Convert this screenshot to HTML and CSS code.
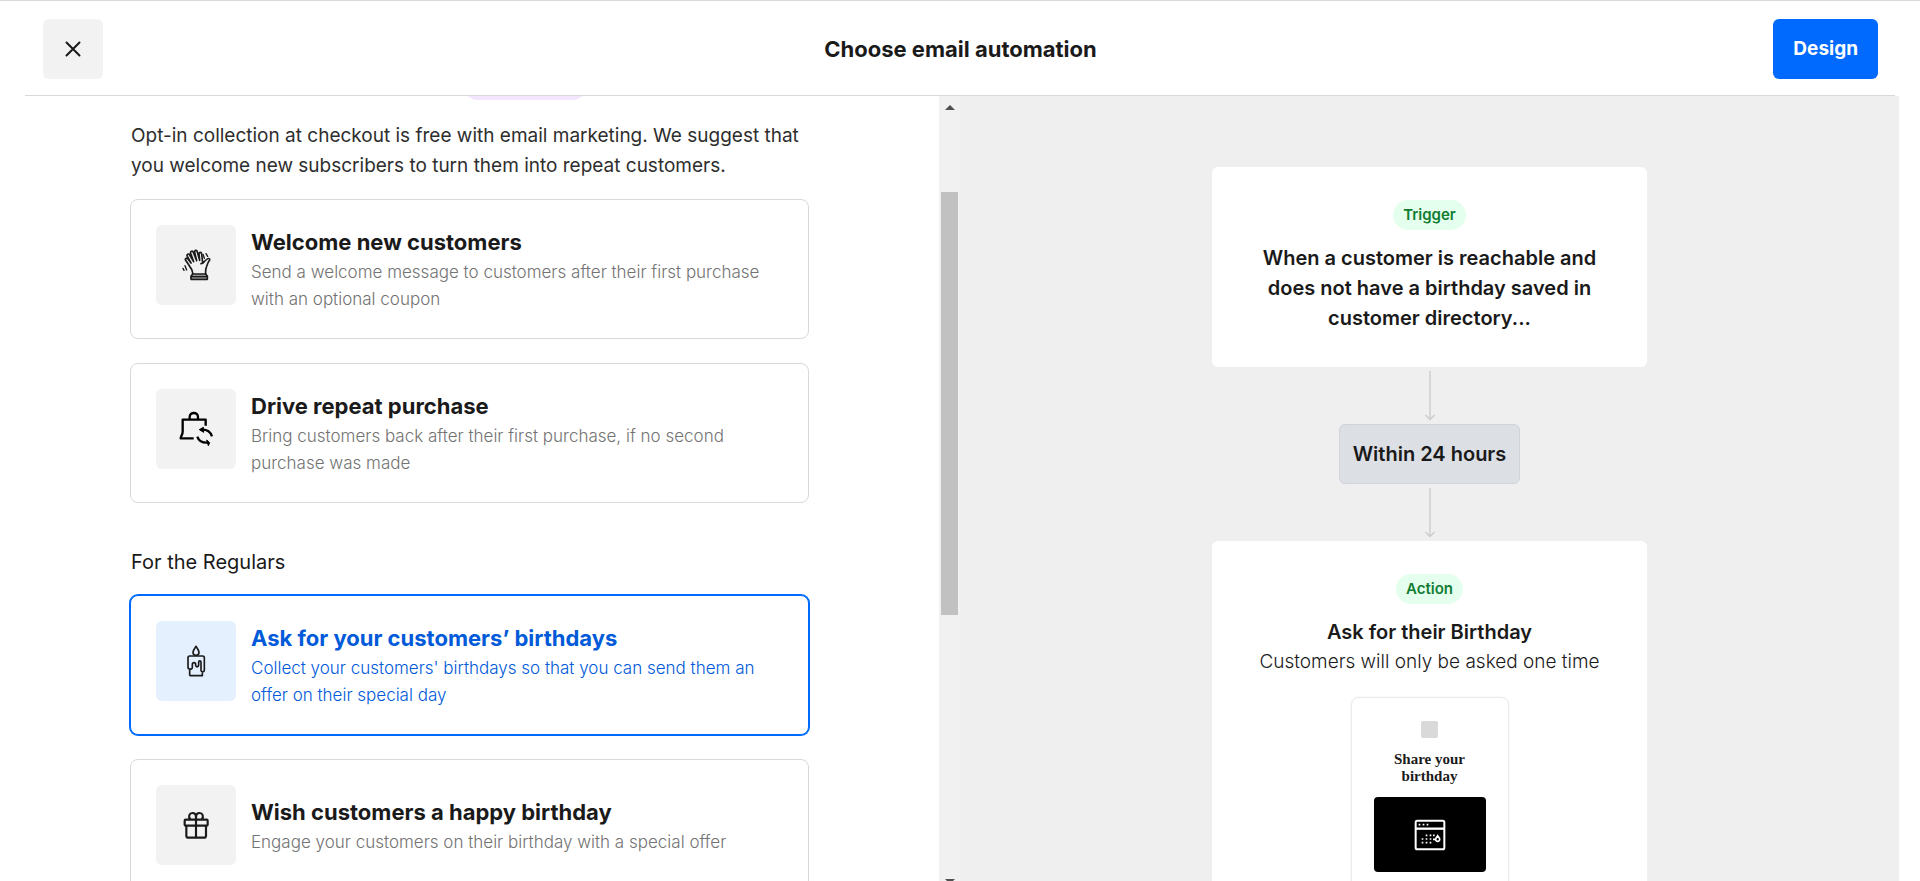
FILE: index.html
```html
<!DOCTYPE html>
<html lang="en">
<head>
<meta charset="utf-8">
<title>Choose email automation</title>
<link rel="stylesheet" href="styles.css">
</head>
<body>
<div class="page">
  <header class="header">
    <div class="header-side">
      <button class="close" type="button" aria-label="Close">
        <svg width="16" height="16" viewBox="0 0 16 16" fill="none" stroke="currentColor" stroke-width="2" stroke-linecap="round"><path d="M1.500 1.500l13 13M14.500 1.500l-13 13"/></svg>
      </button>
    </div>
    <h1 class="header-title">Choose email automation</h1>
    <div class="header-side header-end"><button class="primary" type="button">Design</button></div>
  </header>
  <main class="body">
    <section class="list">
      <div class="list-content">
        <span class="badge-new"></span>
        <p class="intro">Opt-in collection at checkout is free with email marketing. We suggest that you welcome new subscribers to turn them into repeat customers.</p>
        <div class="options">
          <button class="option" type="button">
            <span class="option-icon">
              <svg width="80" height="80" viewBox="108 105 240 240" fill="none" stroke="#1a1a1a" stroke-width="5" stroke-linecap="round" stroke-linejoin="round">
                <path d="M213 268v-9l5-7h39l5 7v9z" fill="#bbb"/>
                <path d="M214 260h48"/>
                <path d="M218 251c1-10-3-15-9-22l-12-18c-3-5 3-9 7-4l9 12-11-20c-3-6 4-10 7-4l12 20-9-25c-2-7 6-9 8-3l10 25-6-25c-1-7 7-8 8-1l7 25-2-19c0-6 7-7 8 0l3 27 10-9c6-6 12-6 11 0-4 5-7 12-9 19-3 7-4 10-3 22"/>
                <path d="M243 221c4 0 7-3 9-6"/>
                <path d="M249 193l4 12M258 191l5 8M195 227l5 13M189 235l3 6" stroke-width="4"/>
              </svg>
            </span>
            <span class="option-text"><span class="option-title">Welcome new customers</span><span class="option-desc">Send a welcome message to customers after their first purchase with an optional coupon</span></span>
          </button>
          <button class="option" type="button">
            <span class="option-icon">
              <svg width="80" height="80" viewBox="108 597 240 240" fill="none" stroke="#000" stroke-width="7" stroke-linejoin="round">
                <path d="M221 745h-39c0-6 6-11 6-20v-36h69v18"/>
                <path d="M209 688v-7c0-16 25-16 25 0v7"/>
                <path d="M244 719c17-1 27 5 32 20M232 740c4 13 14 19 32 18"/>
                <path d="M250 712l-12 7 13 8zM260 750l9 8-4 9z" fill="#000" stroke-width="3"/>
              </svg>
            </span>
            <span class="option-text"><span class="option-title">Drive repeat purchase</span><span class="option-desc">Bring customers back after their first purchase, if no second purchase was made</span></span>
          </button>
        </div>
        <h2 class="group-title">For the Regulars</h2>
        <div class="options">
          <button class="option selected" type="button" aria-pressed="true">
            <span class="option-icon">
              <svg width="80" height="80" viewBox="108 276 240 240" fill="none" stroke="#1a1a1a" stroke-width="5" stroke-linejoin="round">
                <path d="M228 352c5 7 9 12 9 18 0 12-18 12-18 0 0-6 4-11 9-18z"/>
                <path d="M209 440v-20c-3 0-5-2-5-5v-29c0-3 2-5 5-5h39c3 0 5 2 5 5v38c0 6-10 6-10 0v-24c0-6-7-6-7 0v6c0 10-9 10-9 1 0-8-10-8-10 0v8c0 5-4 6-8 5M209 440h38v-12"/>
              </svg>
            </span>
            <span class="option-text"><span class="option-title">Ask for your customers’ birthdays</span><span class="option-desc">Collect your customers' birthdays so that you can send them an offer on their special day</span></span>
          </button>
          <button class="option" type="button">
            <span class="option-icon">
              <svg width="80" height="80" viewBox="108 765 240 240" fill="none" stroke="#1a1a1a" stroke-width="6.500" stroke-linejoin="round">
                <rect x="194" y="869" width="69" height="18" rx="3"/>
                <path d="M199 887v30c0 4 2 6 6 6h47c4 0 6-2 6-6v-30M228 861v62"/>
                <path d="M211 868c-8-9-2-19 6-19 6 0 11 5 11 13 0-8 5-13 11-13 8 0 14 10 6 19"/>
              </svg>
            </span>
            <span class="option-text"><span class="option-title">Wish customers a happy birthday</span><span class="option-desc">Engage your customers on their birthday with a special offer</span></span>
          </button>
        </div>
      </div>
    </section>
    <div class="scrollbar" aria-hidden="true">
      <span class="arrow-up"></span>
      <span class="thumb"></span>
      <span class="arrow-down"></span>
    </div>
    <section class="canvas">
      <article class="step">
        <span class="tag">Trigger</span>
        <p class="step-title">When a customer is reachable and does not have a birthday saved in customer directory...</p>
      </article>
      <svg class="arrow" width="12" height="50" viewBox="0 0 12 50" fill="none" stroke="#ccc" stroke-width="1.4"><path d="M6 0v48M1.500 44L6 48.500 10.500 44"/></svg>
      <div class="delay">Within 24 hours</div>
      <svg class="arrow" width="12" height="50" viewBox="0 0 12 50" fill="none" stroke="#ccc" stroke-width="1.4"><path d="M6 0v48M1.500 44L6 48.500 10.500 44"/></svg>
      <article class="step">
        <span class="tag">Action</span>
        <p class="step-title">Ask for their Birthday</p>
        <p class="step-note">Customers will only be asked one time</p>
        <div class="mail">
          <span class="mail-logo"></span>
          <p class="mail-title">Share your birthday</p>
          <div class="mail-hero">
            <svg width="32" height="32" viewBox="0 0 96 96" fill="none" stroke="#fff" stroke-width="6">
              <rect x="5" y="5" width="86" height="86" rx="5"/>
              <path d="M5 29h86" stroke-width="7"/>
              <path d="M14 17h5M26 17h5M38 17h5M35 49h5M47 49h5M57 49h5M23 60h5M35 60h5M47 60h5M23 71h5M35 71h5M47 71h5" stroke-width="5"/>
              <path d="M71 50c4 5 6 7 6 11 0 8-12 8-12 0 0-4 2-6 6-11zM57 61h8" stroke-width="5"/>
            </svg>
          </div>
        </div>
      </article>
    </section>
  </main>
</div>
</body>
</html>
```
FILE: styles.css
```css
* { box-sizing: border-box; }
body { margin: 0; color: #1a1a1a; background: #fff; font-family: Inter, "Liberation Sans", sans-serif; font-size: 19px; line-height: 30px; }
h1, h2, p { margin: 0; }
button { font: inherit; color: inherit; border: 0; margin: 0; cursor: pointer; }
.page { height: 100vh; display: flex; flex-direction: column; overflow: hidden; border-top: 1px solid #d9d9d9; }
.header { flex: none; display: flex; align-items: center; margin: 0 25px; padding: 18px 17px 16px 18px; border-bottom: 1px solid #d9d9d9; }
.header-side { flex: 1; display: flex; }
.header-end { justify-content: flex-end; }
.header-title { font-size: 22px; font-weight: 700; }
.close { width: 60px; height: 60px; padding: 0; display: flex; align-items: center; justify-content: center; border-radius: 6px; background: #f2f2f2; }
.primary { height: 60px; padding: 0 20px; border-radius: 6px; background: #006aff; color: #fff; font-weight: 700; }
.body { flex: 1; min-height: 0; display: flex; margin-right: 21px; overflow: hidden; }
.list { flex: 1 1 0; min-width: 0; overflow: hidden; }
.list-content { display: flex; flex-direction: column; padding: 0 130px; }
.badge-new { align-self: center; width: 124px; height: 30px; margin: -26px 0 21px 111px; border-radius: 15px; background: #f3e5ff; }
.intro { padding: 0 1px; margin-bottom: 18px; color: #2e2e2e; font-weight: 400; }
.options { display: flex; flex-direction: column; gap: 24px; }
.option { display: flex; align-items: flex-start; gap: 15px; min-height: 140px; width: 100%; padding: 25px; text-align: left; background: #fff; border: 1px solid #d9d9d9; border-radius: 8px; }
.option-icon { flex: none; width: 80px; height: 80px; border-radius: 6px; background: #f2f2f2; }
.option-icon svg { display: block; }
.option-text { min-height: 80px; padding-top: 2px; display: flex; flex-direction: column; justify-content: center; gap: 2px; }
.option-title { font-size: 22px; font-weight: 700; }
.option-desc { font-size: 17px; line-height: 27px; font-weight: 300; color: #737373; }
.selected { border-color: #006aff; box-shadow: 0 0 0 1px #006aff; }
.selected .option-icon { background: #e5f0ff; }
.selected .option-title, .selected .option-desc { color: #005ad9; }
.group-title { padding: 0 1px; margin: 44px 0 18px; font-size: 20px; font-weight: 400; }
.scrollbar { flex: none; width: 21px; display: flex; flex-direction: column; align-items: center; padding: 9px 0 0; background: #f1f1f1; }
.arrow-up, .arrow-down { border: 5px solid transparent; flex: none; }
.arrow-up { border-top: 0; border-bottom-color: #505050; }
.arrow-down { border-bottom: 0; border-top-color: #505050; }
.thumb { flex: none; width: 17px; height: 423px; margin: 82px 0 264px; background: #c1c1c1; }
.canvas { flex: 1 1 0; min-width: 0; display: flex; flex-direction: column; align-items: center; padding-top: 71px; overflow: hidden; background: #efefef; }
.step { flex: none; width: 435px; padding: 33px 40px 34px; display: flex; flex-direction: column; align-items: center; text-align: center; background: #fff; border-radius: 6px; }
.tag { padding: 0 10px; margin-bottom: 13px; border-radius: 15px; background: #e5ffee; color: #107c32; font-size: 15px; font-weight: 600; }
.step-title { font-size: 20px; font-weight: 600; }
.step-note { font-weight: 300; }
.arrow { flex: none; margin: 4px 0 3px; }
.delay { flex: none; padding: 14px 13px; border: 1px solid #cfd4d9; border-radius: 6px; background: #dcdfe4; font-size: 20px; font-weight: 600; }
.mail { width: 158px; margin-top: 20px; padding: 23px 22px; display: flex; flex-direction: column; align-items: center; border: 1px solid #ebebeb; border-radius: 8px; box-shadow: 0 0 2px #e6e6e6; }
.mail-logo { width: 17px; height: 17px; border-radius: 2px; background: #d9d9d9; }
.mail-title { margin: 13px 0 12px; font-family: "Liberation Serif", serif; font-size: 15px; line-height: 17px; font-weight: 700; }
.mail-hero { align-self: stretch; height: 75px; display: flex; align-items: center; justify-content: center; border-radius: 4px; background: #000; }
```
